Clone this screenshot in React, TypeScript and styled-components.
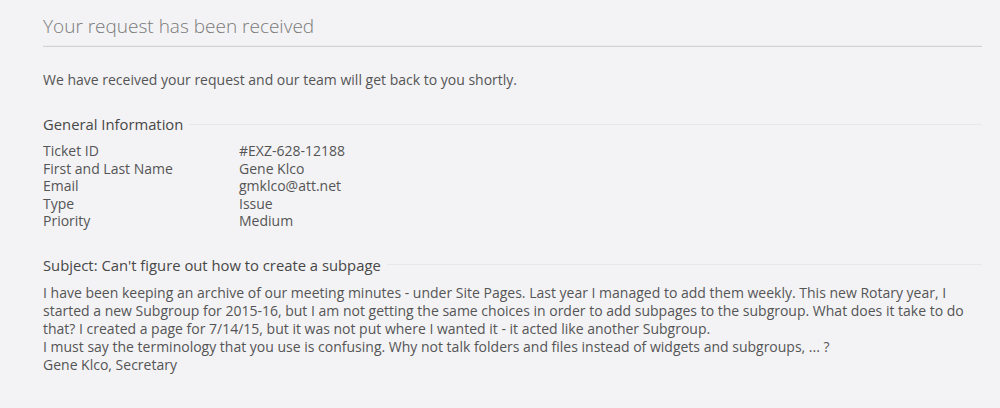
import styled, { createGlobalStyle } from "styled-components";

const GlobalStyle = createGlobalStyle`
  html, body {
    margin: 0;
    padding: 0;
    background: #f3f3f5;
  }
  body {
    font-family: "Open Sans", "Noto Sans", "Liberation Sans", sans-serif;
    color: #555;
  }
`;

const ticket = [
  { label: "Ticket ID", value: "#EXZ-628-12188" },
  { label: "First and Last Name", value: "Gene Klco" },
  { label: "Email", value: "gmklco@att.net" },
  { label: "Type", value: "Issue" },
  { label: "Priority", value: "Medium" },
];

function App() {
  return (
    <>
      <GlobalStyle />
      <Page>
        <Title>Your request has been received</Title>
        <Intro>We have received your request and our team will get back to you shortly.</Intro>

        <Section $gap={26}>
          <Legend>General Information</Legend>
          <InfoGrid>
            {ticket.map((row) => (
              <Row key={row.label}>
                <span>{row.label}</span>
                <span>{row.value}</span>
              </Row>
            ))}
          </InfoGrid>
        </Section>

        <Section $gap={26}>
          <Legend>Subject: Can't figure out how to create a subpage</Legend>
          <Message>
            I have been keeping an archive of our meeting minutes - under Site Pages. Last year I managed to add them
            weekly. This new Rotary year, I started a new Subgroup for 2015-16, but I am not getting the same choices in
            order to add subpages to the subgroup. What does it take to do that? I created a page for 7/14/15, but it
            was not put where I wanted it - it acted like another Subgroup.
            <br />
            I must say the terminology that you use is confusing. Why not talk folders and files instead of widgets and
            subgroups, ... ?
            <br />
            Gene Klco, Secretary
          </Message>
        </Section>
      </Page>
    </>
  );
}

export default App;

const Page = styled.div`
  width: 939px;
  padding: 14px 0 0 43px;
  box-sizing: content-box;
`;

const Title = styled.h1`
  margin: 0;
  padding-bottom: 7px;
  font-size: 19px;
  font-weight: 300;
  line-height: 25px;
  color: #7a7a7a;
  border-bottom: 1px solid #d2d2d4;
  box-shadow: 0 -3px 0 -2px #ececee inset;
`;

const Intro = styled.p`
  margin: 24px 0 0;
  font-size: 14px;
  line-height: 18px;
  color: #555;
`;

const Section = styled.fieldset<{ $gap: number }>`
  margin: ${(p) => p.$gap}px 0 0;
  padding: 0;
  border: none;
  border-top: 1px solid #e8e8ea;
  min-width: 0;
`;

const Legend = styled.legend`
  padding: 0 6px 0 0;
  font-size: 14.8px;
  line-height: 18px;
  color: #474747;
`;

const InfoGrid = styled.div`
  margin-top: 9px;
  display: flex;
  flex-direction: column;
`;

const Row = styled.div`
  display: grid;
  grid-template-columns: 196px 1fr;
  font-size: 14px;
  line-height: 17.6px;
  color: #555;
`;

const Message = styled.p`
  margin: 10px 0 0;
  font-size: 14px;
  line-height: 18px;
  color: #555;
`;
